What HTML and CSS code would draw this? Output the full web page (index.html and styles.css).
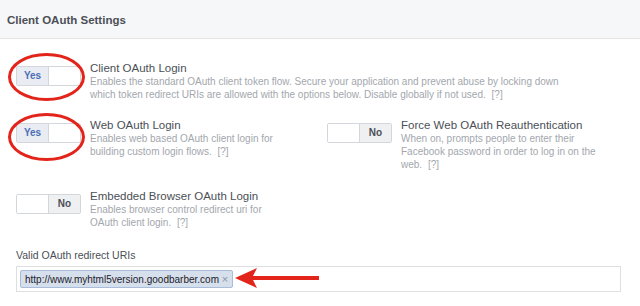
FILE: index.html
```
<!DOCTYPE html>
<html lang="en">
<head>
    <meta charset="UTF-8">
    <meta name="viewport" content="width=device-width, initial-scale=1.0">
    <title>Client OAuth Settings</title>
    <link rel="stylesheet" href="styles.css">
</head>
<body>
    <div class="panel">
        <div class="panel-header">Client OAuth Settings</div>

        <div class="content">
            <div class="setting wide">
                <div class="switch on"><span class="yes">Yes</span><span class="blank"></span></div>
                <div class="info">
                    <div class="name">Client OAuth Login</div>
                    <div class="desc">Enables the standard OAuth client token flow. Secure your application and prevent abuse by locking down which token redirect URIs are allowed with the options below. Disable globally if not used. <a class="help">[?]</a></div>
                </div>
            </div>

            <div class="grid">
                <div class="setting">
                    <div class="switch on"><span class="yes">Yes</span><span class="blank"></span></div>
                    <div class="info">
                        <div class="name">Web OAuth Login</div>
                        <div class="desc">Enables web based OAuth client login for building custom login flows. <a class="help">[?]</a></div>
                    </div>
                </div>
                <div class="setting">
                    <div class="switch off"><span class="blank"></span><span class="no">No</span></div>
                    <div class="info">
                        <div class="name">Force Web OAuth Reauthentication</div>
                        <div class="desc">When on, prompts people to enter their Facebook password in order to log in on the web. <a class="help">[?]</a></div>
                    </div>
                </div>
                <div class="setting">
                    <div class="switch off"><span class="blank"></span><span class="no">No</span></div>
                    <div class="info">
                        <div class="name">Embedded Browser OAuth Login</div>
                        <div class="desc">Enables browser control redirect uri for OAuth client login. <a class="help">[?]</a></div>
                    </div>
                </div>
            </div>

            <label class="field-label">Valid OAuth redirect URIs</label>
            <div class="token-input">
                <span class="token">http://www.myhtml5version.goodbarber.com <span class="remove">&times;</span></span>
            </div>
        </div>

        <!-- annotations drawn on top of the screenshot -->
        <div class="circle circle-1"></div>
        <div class="circle circle-2"></div>
        <svg class="arrow" width="90" height="22" viewBox="0 0 90 22">
            <path d="M17 9 L84 9 L84 13 L17 13 Z" fill="#e3241b"/>
            <path d="M0 11 L22 1 L17 11 L22 21 Z" fill="#e3241b"/>
        </svg>
    </div>
</body>
</html>
```
FILE: styles.css
```
body {
    margin: 0;
    font-family: "Liberation Sans", Arial, sans-serif;
    background-color: #fff;
}
.panel {
    position: relative;
    width: 640px;
    height: 306px;
    overflow: hidden;
}
.panel-header {
    height: 38px;
    line-height: 40px;
    padding-left: 7px;
    background-color: #f6f7f9;
    border-bottom: 1px solid #e5e5e5;
    font-size: 11.5px;
    font-weight: bold;
    color: #4b4f56;
}
.content {
    padding: 22px 16px 0;
}
.setting {
    display: flex;
    align-items: flex-start;
    gap: 9px;
}
.grid {
    display: grid;
    grid-template-columns: 311px 1fr;
    row-gap: 18px;
    margin-top: 17px;
}
.switch {
    display: flex;
    flex-shrink: 0;
    width: 63px;
    height: 18px;
    margin-top: 5px;
    border: 1px solid #d3d6db;
    border-radius: 2px;
    font-size: 10px;
    font-weight: bold;
    line-height: 18px;
    text-align: center;
}
.switch span {
    flex: 1;
}
.switch .yes {
    background-color: #e9ecf2;
    color: #4b6fb5;
    border-right: 1px solid #d3d6db;
}
.switch .no {
    background-color: #eff0f2;
    color: #4b4f56;
    border-left: 1px solid #d3d6db;
}
.switch .blank {
    background-color: #fff;
}
.info {
    width: 195px;
}
.wide .info {
    width: 480px;
}
.name {
    font-size: 11.5px;
    line-height: 14px;
    color: #4b4f56;
}
.desc {
    font-size: 10px;
    line-height: 13px;
    color: #a3a7ad;
}
.help {
    margin-left: 3px;
    color: #a3a7ad;
}
.field-label {
    display: block;
    margin-top: 19px;
    font-size: 10.5px;
    line-height: 14px;
    color: #4b4f56;
}
.token-input {
    width: 605px;
    height: 26px;
    margin-top: 4px;
    border: 1px solid #dddfe2;
    padding: 2px 3px;
    box-sizing: border-box;
}
.token {
    display: inline-block;
    height: 16px;
    line-height: 16px;
    padding: 0 4px;
    background-color: #d6dfec;
    border: 1px solid #a9bcd9;
    border-radius: 2px;
    font-size: 10px;
    color: #1d2129;
}
.token .remove {
    color: #8d949e;
    font-size: 11px;
}
.circle {
    position: absolute;
    left: 8px;
    width: 71px;
    height: 42px;
    border: 3px solid #e3241b;
    border-radius: 50%;
}
.circle-1 {
    top: 53px;
}
.circle-2 {
    top: 113px;
}
.arrow {
    position: absolute;
    left: 235px;
    top: 267px;
}
```
